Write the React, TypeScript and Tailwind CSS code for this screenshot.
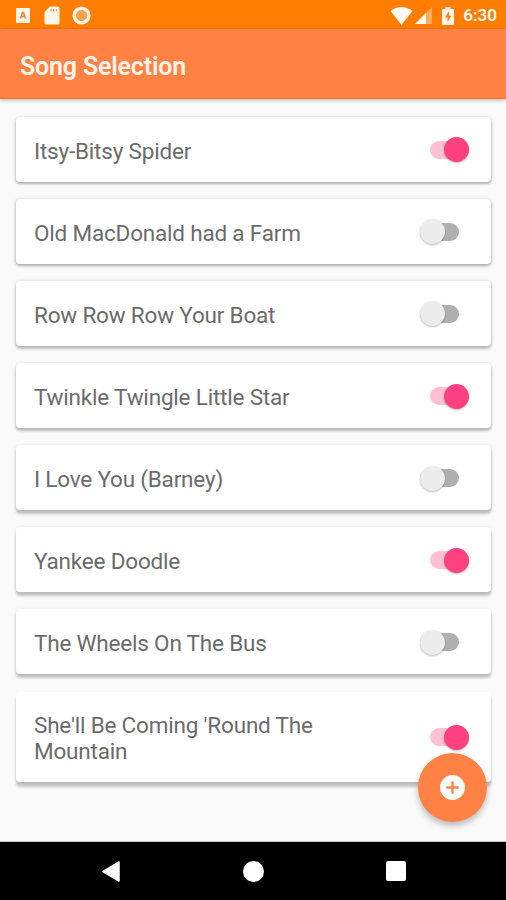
import clsx from 'clsx';

interface Song {
  title: string;
  enabled: boolean;
  shadow: string;
}

// Cards lower on the screen cast a longer shadow
const songs: Song[] = [
  { title: 'Itsy-Bitsy Spider', enabled: true, shadow: 'shadow-[0_1px_3px_1px_rgba(0,0,0,0.17),0_2px_2px_rgba(0,0,0,0.15)]' },
  { title: 'Old MacDonald had a Farm', enabled: false, shadow: 'shadow-[0_1px_3px_1px_rgba(0,0,0,0.16),0_2px_3px_rgba(0,0,0,0.17)]' },
  { title: 'Row Row Row Your Boat', enabled: false, shadow: 'shadow-[0_1px_3px_1px_rgba(0,0,0,0.14),0_3px_3px_rgba(0,0,0,0.17)]' },
  { title: 'Twinkle Twingle Little Star', enabled: true, shadow: 'shadow-[0_1px_3px_1px_rgba(0,0,0,0.11),0_3px_3px_rgba(0,0,0,0.2)]' },
  { title: 'I Love You (Barney)', enabled: false, shadow: 'shadow-[0_1px_3px_1px_rgba(0,0,0,0.09),0_4px_3px_rgba(0,0,0,0.2)]' },
  { title: 'Yankee Doodle', enabled: true, shadow: 'shadow-[0_1px_3px_1px_rgba(0,0,0,0.08),0_4px_3px_rgba(0,0,0,0.2)]' },
  { title: 'The Wheels On The Bus', enabled: false, shadow: 'shadow-[0_1px_3px_1px_rgba(0,0,0,0.07),0_4px_3px_rgba(0,0,0,0.2)]' },
  { title: "She'll Be Coming 'Round The Mountain", enabled: true, shadow: 'shadow-[0_2px_3px_rgba(0,0,0,0.08),0_5px_3px_rgba(0,0,0,0.2)]' },
];

const StatusBar = () => (
  <div className="flex h-[29px] items-center justify-between bg-[#ff7d00] pt-[2px] pr-[9px] pl-4 text-[#fffaf4]">
    <div className="flex items-center">
      <svg className="h-[15px] w-[14px]" viewBox="0 0 14 15">
        <rect width="14" height="15" rx="1" fill="#fff5e9" />
        <path d="M4.6 10.5 L6.5 4.5 H7.5 L9.4 10.5 M5.2 8.6 H8.8" fill="none" stroke="#f2823a" strokeWidth="1.5" />
      </svg>
      <svg className="ml-[14px] h-[19px] w-4" viewBox="0 0 16 19">
        <path d="M6 0.5 H14 Q15.5 0.5 15.5 2 V17 Q15.5 18.5 14 18.5 H2 Q0.5 18.5 0.5 17 V6 Z" fill="#fff5e9" />
        <path d="M7 3 V5.5 M9.7 3 V5.5 M12.4 3 V5.5" stroke="#ffa24d" strokeWidth="1.2" />
      </svg>
      <svg className="ml-3 size-[19px]" viewBox="0 0 19 19">
        <circle cx="9.5" cy="9.5" r="7.4" fill="#ffa34f" stroke="#fff5e9" strokeWidth="3.3" />
      </svg>
    </div>
    <div className="flex items-center">
      <svg className="h-[18px] w-[23px]" viewBox="0 0 23 18">
        <path d="M0.5 4 Q11.5 -4 22.5 4 L11.5 18 Z" fill="#fffaf4" />
      </svg>
      <svg className="ml-[2px] size-[17px]" viewBox="0 0 17 17">
        <path d="M17 0 V17 H0 Z" fill="#ffab5c" />
        <path d="M11 6 V17 H0 Z" fill="#fffaf4" />
      </svg>
      <svg className="ml-[10px] h-[18px] w-3" viewBox="0 0 12 18">
        <path d="M3.5 0 H8.5 V2 H11 Q12 2 12 3 V17 Q12 18 11 18 H1 Q0 18 0 17 V3 Q0 2 1 2 H3.5 Z" fill="#fff5e9" />
        <path d="M7 4 L3 10.5 H5.5 V15 L9.2 8.7 H7 Z" fill="#ff7d00" />
      </svg>
      <span className="ml-[9px] text-[17px] leading-none font-semibold">6:30</span>
    </div>
  </div>
);

const Toggle = ({ enabled }: { enabled: boolean }) => (
  <div className={clsx('mb-[1.6px] flex h-[25px] w-[49px] shrink-0 items-center', enabled && 'justify-end')}>
    <div className={clsx('flex h-[18px] w-[39px] items-center rounded-full', enabled ? 'justify-end bg-[#ffbfd5]' : 'bg-[#b0b0b0]')}>
      <div
        className={clsx(
          'size-[25px] shrink-0 rounded-full shadow-[0_1px_2px_rgba(0,0,0,0.28)]',
          enabled ? 'bg-[#ff4081]' : 'bg-[#ececec]',
        )}
      />
    </div>
  </div>
);

const SongCard = ({ song }: { song: Song }) => (
  <div className={clsx('flex items-center justify-between rounded-[4px] bg-white pt-[20.3px] pr-[22px] pb-[18.1px] pl-[18px]', song.shadow)}>
    <p className="w-[320px] text-[22.5px] leading-[26px] tracking-[-0.19px] text-[#6b6b6b]">{song.title}</p>
    <Toggle enabled={song.enabled} />
  </div>
);

const NavigationBar = () => (
  <nav className="flex h-[58px] items-center justify-between bg-black pr-[100px] pl-[102px]">
    <svg className="h-[21px] w-[18px]" viewBox="0 0 18 21">
      <path d="M17 1 V20 L1 10.5 Z" fill="#fff" stroke="#fff" strokeWidth="1.5" strokeLinejoin="round" />
    </svg>
    <div className="size-[21px] rounded-full bg-white" />
    <div className="size-5 rounded-[2px] bg-white" />
  </nav>
);

const App = () => {
  return (
    <div className="flex h-[900px] w-[506px] flex-col overflow-hidden bg-[#fafafa] font-['Roboto',sans-serif]">
      <StatusBar />
      <header className="z-10 flex h-[70px] shrink-0 items-center border-b border-[#ed762c] bg-[#ff8144] pt-[5px] pl-5 shadow-[0_1px_4px_rgba(0,0,0,0.3)]">
        <h1 className="text-[25px] leading-none font-semibold tracking-[-0.18px] text-[#fff3ea]">Song Selection</h1>
      </header>
      <main className="relative flex-1 border-b border-[#c4c4c4]">
        <div className="flex flex-col gap-[17.1px] pt-[18px] pr-[15px] pl-4">
          {songs.map((song) => (
            <SongCard key={song.title} song={song} />
          ))}
        </div>
        {/* Add song button */}
        <button
          aria-label="Add song"
          className="absolute right-[19px] bottom-[19px] flex size-[69px] items-center justify-center rounded-full bg-[#ff8144] shadow-[0_4px_6px_rgba(0,0,0,0.25)]"
        >
          <svg className="size-[25px]" viewBox="0 0 25 25">
            <circle cx="12.5" cy="12.5" r="12.5" fill="#fff" />
            <path d="M12.5 6.3 V18.7 M6.3 12.5 H18.7" stroke="#ff8144" strokeWidth="2.3" />
          </svg>
        </button>
      </main>
      <NavigationBar />
    </div>
  );
};

export default App;
